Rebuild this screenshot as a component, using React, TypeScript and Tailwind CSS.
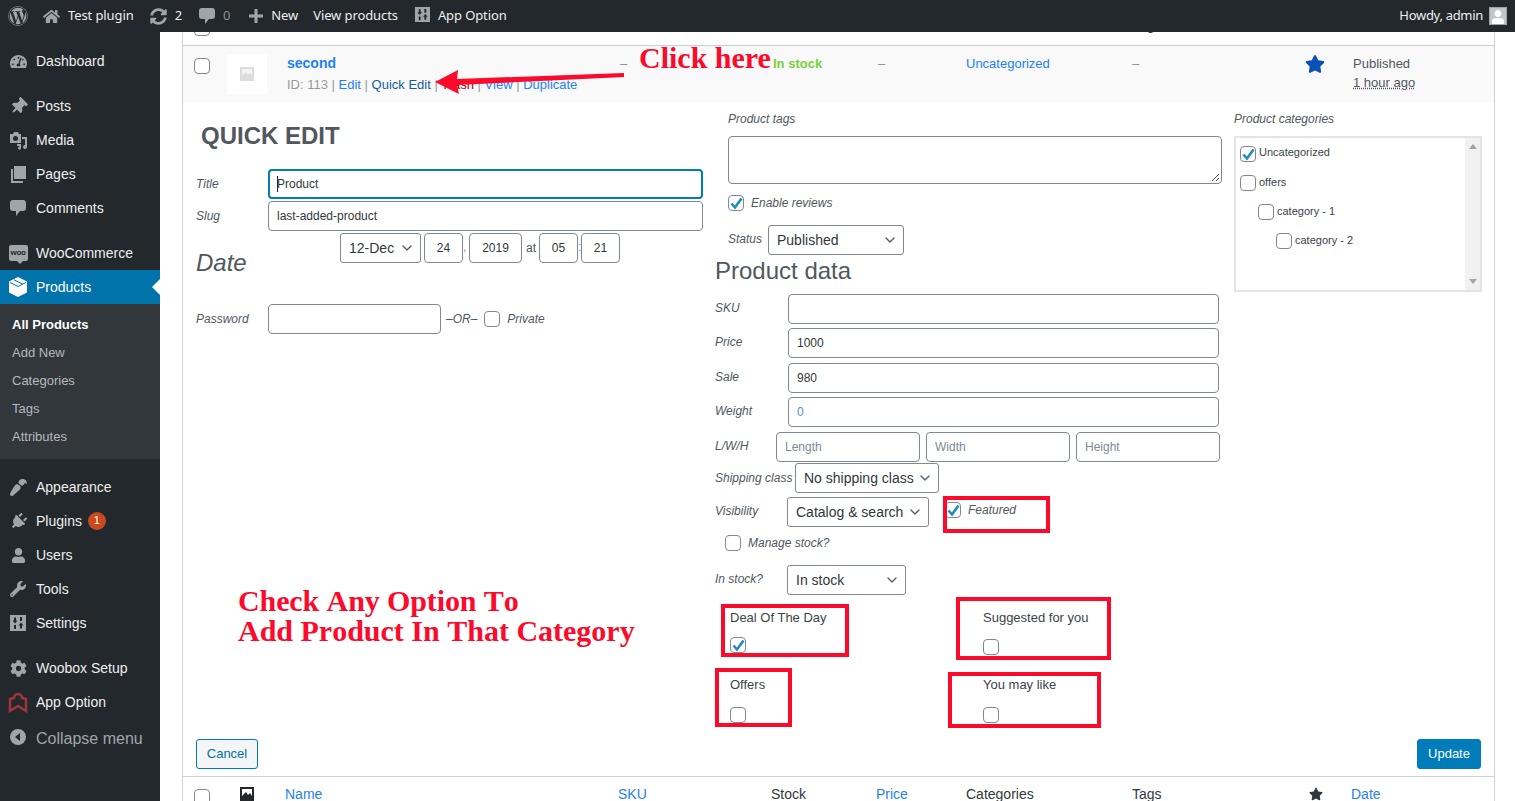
import { ReactNode } from "react";
import { ChevronDown } from "lucide-react";
import {
  FaCog,
  FaHome,
  FaPaintBrush,
  FaPlug,
  FaStar,
  FaSyncAlt,
  FaTachometerAlt,
  FaThumbtack,
  FaUser,
  FaWordpress,
  FaWrench,
} from "react-icons/fa";

const Sliders = ({ size = 16, color = "#a0a5aa" }: { size?: number; color?: string }) => (
  <svg width={size} height={size} viewBox="0 0 16 16">
    <path
      fill={color}
      fillRule="evenodd"
      d="M0 0h16v16H0zM4 2.500v3H2.500L5 8.500l2.500-3H6v-3zM4 10v4h2v-4zM10 2v4h2V2zM11 7.500L8.500 10.500H10v3h2v-3h1.500z"
    />
  </svg>
);

const Bubble = ({ color = "#a0a5aa" }: { color?: string }) => (
  <svg width="16" height="18" viewBox="0 0 16 18">
    <path fill={color} d="M3 1h10a3 3 0 0 1 3 3v5a3 3 0 0 1-3 3h-3l-4 5v-5H3a3 3 0 0 1-3-3V4a3 3 0 0 1 3-3z" />
  </svg>
);

const MediaIcon = () => (
  <svg width="19" height="19" viewBox="0 0 19 19" fill="#a0a5aa">
    <path fillRule="evenodd" d="M1 3h3l1-2h4l1 2h2v9H1zM6.500 5a2.500 2.500 0 1 0 0 5 2.500 2.500 0 0 0 0-5z" />
    <path d="M13 6h5v10a2 2 0 1 1-2-2V8h-3zM8 13h4v4a1.500 1.500 0 1 1-1.500-1.500V15H8z" />
  </svg>
);

const PagesIcon = () => (
  <svg width="15" height="17" viewBox="0 0 15 17" fill="#a0a5aa">
    <path d="M3 0h12v13H3z" />
    <path d="M0 3h2v12h10v2H0z" />
  </svg>
);

const BoxIcon = () => (
  <svg width="18" height="20" viewBox="0 0 18 20" fill="#fff">
    <path d="M9 0l9 4.500V15.500L9 20l-9-4.500V4.500z" />
    <path d="M1 5.500l8 4 8-4M5 2.800l8.500 4.200" fill="none" stroke="#0073aa" />
  </svg>
);

const WooIcon = () => (
  <div className="relative flex h-[16px] w-[19px] items-center justify-center rounded-[2px] bg-[#a0a5aa]">
    <span className="text-[8px] font-bold leading-none tracking-[-0.4px] text-[#23282d]">woo</span>
    <div className="absolute left-[8px] top-[16px] border-x-[3px] border-t-[3px] border-x-transparent border-t-[#a0a5aa]" />
  </div>
);

const RibbonIcon = () => (
  <svg width="20" height="22" viewBox="0 0 20 22" fill="none" stroke="#a0353f" strokeWidth="2.500">
    <path d="M2 20V8l4-1a4 4 0 0 1 8 0l4 1v12l-8-5z" />
  </svg>
);

const CollapseIcon = () => (
  <svg width="16" height="16" viewBox="0 0 16 16">
    <path fill="#a0a5aa" fillRule="evenodd" d="M8 0a8 8 0 1 1 0 16A8 8 0 0 1 8 0zM10 4L5 8l5 4z" />
  </svg>
);

const ImageIcon = ({ color = "#23282d", bg = "#fff" }: { color?: string; bg?: string }) => (
  <svg width="14" height="14" viewBox="0 0 14 14">
    <path fill={color} d="M0 0h14v14H0z" />
    <path fill={bg} d="M2 2h10v7l-2-3-2 2-2-3-4 4z" />
  </svg>
);

const Check = ({ on = false }: { on?: boolean }) => (
  <div className="relative h-4 w-4 shrink-0 rounded-[4px] border border-[#7e8993] bg-white">
    {on && (
      <svg className="absolute left-[-1px] top-[-1px]" width="17" height="17" viewBox="0 0 17 17">
        <path d="M3.500 8.500l3.500 4L13.500 3.500" fill="none" stroke="#1e8cbe" strokeWidth="2.600" />
      </svg>
    )}
  </div>
);

const Field = ({ value, placeholder, className }: { value?: string; placeholder?: string; className: string }) => (
  <input
    readOnly
    value={value ?? ""}
    placeholder={placeholder}
    className={`h-[30px] rounded-[4px] border border-[#7e8993] bg-white px-2 text-xs text-[#32373c] outline-none placeholder:text-[#7e8993] ${className}`}
  />
);

const Select = ({ label, className }: { label: string; className: string }) => (
  <div
    className={`flex h-[30px] shrink-0 items-center justify-between rounded-[3px] border border-[#7e8993] bg-white pl-2 pr-[5px] text-sm text-[#32373c] ${className}`}
  >
    <span className="whitespace-nowrap">{label}</span>
    <ChevronDown size={16} strokeWidth={2} color="#555d66" />
  </div>
);

const Label = ({ children, className }: { children: ReactNode; className: string }) => (
  <span className={`shrink-0 whitespace-nowrap text-xs italic text-[#50575e] ${className}`}>{children}</span>
);

const MenuItem = ({ icon, label, extra }: { icon: ReactNode; label: string; extra?: ReactNode }) => (
  <div className="flex h-[34px] items-center text-sm text-[#eeeeee]">
    <div className="flex w-9 justify-center">{icon}</div>
    <span>{label}</span>
    {extra}
  </div>
);

const Sidebar = () => (
  <aside className="flex w-40 shrink-0 flex-col bg-[#23282d] pt-3">
    <MenuItem icon={<FaTachometerAlt size={17} color="#a0a5aa" />} label="Dashboard" />
    <div className="mt-[11px]">
      <MenuItem icon={<FaThumbtack size={17} color="#a0a5aa" className="rotate-45" />} label="Posts" />
      <MenuItem icon={<MediaIcon />} label="Media" />
      <MenuItem icon={<PagesIcon />} label="Pages" />
      <MenuItem icon={<Bubble />} label="Comments" />
    </div>
    <div className="mt-[11px]">
      <MenuItem icon={<WooIcon />} label="WooCommerce" />
      <div className="relative flex h-[34px] items-center bg-[#0073aa] text-sm text-white">
        <div className="flex w-9 justify-center">
          <BoxIcon />
        </div>
        <span>Products</span>
        <div className="absolute right-0 top-[9px] border-y-8 border-r-8 border-y-transparent border-r-white" />
      </div>
      <div className="flex flex-col bg-[#32373c] pb-2 pl-3 pt-[7px] text-[13px] text-[#b4b9be]">
        <span className="flex h-7 items-center font-bold text-white">All Products</span>
        <span className="flex h-7 items-center">Add New</span>
        <span className="flex h-7 items-center">Categories</span>
        <span className="flex h-7 items-center">Tags</span>
        <span className="flex h-7 items-center">Attributes</span>
      </div>
    </div>
    <div className="mt-[11px]">
      <MenuItem icon={<FaPaintBrush size={17} color="#a0a5aa" className="rotate-180" />} label="Appearance" />
      <MenuItem
        icon={<FaPlug size={17} color="#a0a5aa" className="rotate-45" />}
        label="Plugins"
        extra={
          <span className="ml-[6px] flex h-[18px] w-[18px] items-center justify-center rounded-full bg-[#ca4a1f] text-[11px] text-white">
            1
          </span>
        }
      />
      <MenuItem icon={<FaUser size={15} color="#a0a5aa" />} label="Users" />
      <MenuItem icon={<FaWrench size={16} color="#a0a5aa" />} label="Tools" />
      <MenuItem icon={<Sliders />} label="Settings" />
    </div>
    <div className="mt-[11px]">
      <MenuItem icon={<FaCog size={17} color="#a0a5aa" />} label="Woobox Setup" />
      <MenuItem icon={<RibbonIcon />} label="App Option" />
    </div>
    <div className="mt-[3px] flex h-[34px] items-center text-base text-[#a0a5aa]">
      <div className="flex w-9 justify-center pb-1">
        <CollapseIcon />
      </div>
      <span>Collapse menu</span>
    </div>
  </aside>
);

const TopBar = () => (
  <header className="relative z-10 flex h-8 shrink-0 items-center justify-between bg-[#23282d] pl-2 pr-2 font-['Noto_Sans',sans-serif] text-[13px] tracking-[-0.1px] text-[#eeeeee]">
    <div className="flex items-center">
      <FaWordpress size={20} color="#a0a5aa" />
      <FaHome size={17} color="#a0a5aa" className="ml-[15px]" />
      <span className="ml-2">Test plugin</span>
      <FaSyncAlt size={17} color="#a0a5aa" className="ml-[16px]" />
      <span className="ml-2">2</span>
      <div className="ml-[17px] flex">
        <Bubble />
      </div>
      <span className="ml-2 text-[#8c8f94]">0</span>
      <svg className="ml-[19px]" width="14" height="14" viewBox="0 0 14 14" fill="#a0a5aa">
        <path d="M5.500 0h3v5.500H14v3H8.500V14h-3V8.500H0v-3h5.500z" />
      </svg>
      <span className="ml-2">New</span>
      <span className="ml-[15px]">View products</span>
      <div className="ml-[17px] flex pb-1">
        <Sliders size={15} />
      </div>
      <span className="ml-2">App Option</span>
    </div>
    <div className="flex items-center">
      <span className="tracking-[-0.3px]">Howdy, admin</span>
      <div className="ml-[6px] flex h-[18px] w-[18px] items-end justify-center overflow-hidden border border-[#a0a5aa] bg-[#c3c4c7]">
        <FaUser size={14} color="#fff" />
      </div>
    </div>
  </header>
);

const columns = "grid grid-cols-[57px_45px_333px_153px_105px_90px_166px_172px_47px_1fr]";

// the repeated header at the top sits mostly under the admin bar, only descenders show
const HeadRow = ({ scrolled }: { scrolled?: boolean }) => (
  <div className={`${columns} h-[37px] shrink-0 pt-[8px] text-sm leading-[18px] text-[#32373c]`}>
    <div className="pl-[11px] pt-1">
      <Check />
    </div>
    <div className="pt-[2px]">
      <ImageIcon />
    </div>
    <span className="text-[#2a7fe8]">{!scrolled && "Name"}</span>
    <span className="text-[#2a7fe8]">{!scrolled && "SKU"}</span>
    <span>{!scrolled && "Stock"}</span>
    <span className="text-[#2a7fe8]">{!scrolled && "Price"}</span>
    <span>{scrolled ? "" : "Categories"}</span>
    <span>Tags</span>
    <div className="pl-[5px] pt-[2px]">
      <FaStar size={14} color="#32373c" />
    </div>
    <span className="text-[#2a7fe8]">{!scrolled && "Date"}</span>
  </div>
);

const ProductRow = () => (
  <div className={`${columns} h-[57px] shrink-0 border-t border-[#ccd0d4] bg-[#f9f9f9] text-[13px] leading-[18px] text-[#50575e]`}>
    <div className="pl-[11px] pt-3">
      <Check />
    </div>
    <div className="-ml-[13px] pt-2">
      <div className="flex h-10 w-10 items-center justify-center bg-white">
        <ImageIcon color="#dcdcde" bg="#f4f4f4" />
      </div>
    </div>
    <div className="pl-[2px] pt-[7px]">
      <div className="text-sm font-bold text-[#1e7fff]">second</div>
      <div className="mt-[3px] whitespace-nowrap text-[#999999]">
        ID: 113 | <span className="text-[#1e7fff]">Edit</span> | <span className="text-[#135e96]">Quick Edit</span> |{" "}
        <span className="text-[#a00000]">Trash</span> | <span className="text-[#1e7fff]">View</span> |{" "}
        <span className="text-[#1e7fff]">Duplicate</span>
      </div>
    </div>
    <span className="pl-[2px] pt-[9px] text-[#8c8f94]">–</span>
    <span className="pl-[2px] pt-[9px] font-bold text-[#7ad03a]">In stock</span>
    <span className="pl-[2px] pt-[9px] text-[#8c8f94]">–</span>
    <span className="pt-[9px] text-[#1e7fff]">Uncategorized</span>
    <span className="pt-[9px] text-[#8c8f94]">–</span>
    <div className="pl-[1px] pt-[8px]">
      <FaStar size={20} color="#0a50b5" />
    </div>
    <div className="pl-[2px] pt-[9px]">
      <div>Published</div>
      <div className="mt-[1px] underline decoration-dotted">1 hour ago</div>
    </div>
  </div>
);

const LeftColumn = () => (
  <div className="flex w-[507px] shrink-0 flex-col">
    <h2 className="ml-[5px] mt-[19px] text-2xl font-bold leading-[30px] text-[#50575e]">QUICK EDIT</h2>
    <div className="mt-[18px] flex">
      <Label className="w-[72px] leading-[30px]">Title</Label>
      <div className="relative flex-1">
        <Field value="Product" className="w-full !border-2 !border-[#007cba] !pl-[7px]" />
        <div className="absolute left-[9px] top-[7px] h-4 w-px bg-[#23282d]" />
      </div>
    </div>
    <div className="mt-[2px] flex">
      <Label className="w-[72px] leading-[30px]">Slug</Label>
      <Field value="last-added-product" className="flex-1" />
    </div>
    <div className="mt-[2px] flex items-start">
      <div className="w-[144px] pt-[15px] text-2xl italic leading-[30px] text-[#50575e]">Date</div>
      <Select label="12-Dec" className="w-[81px]" />
      <Field value="24" className="ml-[3px] w-[39px] text-center" />
      <span className="w-[6px] pt-[6px] text-xs text-[#8c8f94]">,</span>
      <Field value="2019" className="w-[53px] text-center" />
      <span className="w-[17px] pl-[4px] pt-[7px] text-xs text-[#50575e]">at</span>
      <Field value="05" className="w-[39px] text-center" />
      <span className="w-[3px] pt-[6px] text-xs text-[#8c8f94]">:</span>
      <Field value="21" className="w-[39px] text-center" />
    </div>
    <div className="mt-[26px] flex items-center">
      <Label className="w-[72px]">Password</Label>
      <Field className="w-[173px]" />
      <Label className="ml-[5px]">–OR–</Label>
      <div className="ml-[7px]">
        <Check />
      </div>
      <Label className="ml-[7px]">Private</Label>
    </div>
  </div>
);

const DataRow = ({ label, value, placeholder, blue }: { label: string; value?: string; placeholder?: string; blue?: boolean }) => (
  <div className="flex">
    <Label className="w-[73px] leading-7">{label}</Label>
    <Field value={value} placeholder={placeholder} className={`w-[431px] ${blue ? "!text-[#5a8fb5]" : ""}`} />
  </div>
);

const MiddleColumn = () => (
  <div className="flex w-[507px] shrink-0 flex-col">
    <div className="flex flex-col pl-[13px]">
      <Label className="mt-2 leading-[18px]">Product tags</Label>
      <div className="relative mt-2 h-12 w-[494px] rounded-[4px] border border-[#7e8993] bg-white">
        <svg className="absolute bottom-[1px] right-[1px]" width="9" height="9" viewBox="0 0 9 9" stroke="#50575e">
          <path d="M1 8L8 1M5 8l3-3" />
        </svg>
      </div>
      <div className="mt-[11px] flex items-center">
        <Check on />
        <Label className="ml-[7px]">Enable reviews</Label>
      </div>
      <div className="mt-[14px] flex">
        <Label className="w-10 leading-7">Status</Label>
        <Select label="Published" className="w-[136px]" />
      </div>
    </div>
    <h3 className="mt-[1px] text-2xl leading-[30px] text-[#50575e]">Product data</h3>
    <div className="mt-2 flex flex-col">
      <DataRow label="SKU" />
      <div className="mt-1">
        <DataRow label="Price" value="1000" />
      </div>
      <div className="mt-[5px]">
        <DataRow label="Sale" value="980" />
      </div>
      <div className="mt-1">
        <DataRow label="Weight" value="0" blue />
      </div>
    </div>
    <div className="mt-[5px] flex">
      <Label className="w-[61px] leading-7">L/W/H</Label>
      <div className="flex gap-[6px]">
        <Field placeholder="Length" className="w-[144px]" />
        <Field placeholder="Width" className="w-[144px]" />
        <Field placeholder="Height" className="w-[144px]" />
      </div>
    </div>
    <div className="mt-px flex">
      <Label className="w-[80px] leading-[30px]">Shipping class</Label>
      <Select label="No shipping class" className="w-[144px]" />
    </div>
    <div className="mt-1 flex">
      <Label className="w-[72px] leading-7">Visibility</Label>
      <Select label="Catalog & search" className="w-[142px]" />
      <div className="ml-[16px] mt-[5px] flex h-4 items-center">
        <Check on />
        <Label className="ml-[7px]">Featured</Label>
      </div>
    </div>
    <div className="ml-[10px] mt-2 flex items-center">
      <Check />
      <Label className="ml-[7px]">Manage stock?</Label>
    </div>
    <div className="mt-[14px] flex">
      <Label className="w-[72px] leading-7">In stock?</Label>
      <Select label="In stock" className="w-[119px]" />
    </div>
    <div className="mt-[14px] grid grid-cols-[253px_1fr] pl-[15px] text-[13px] leading-[18px] text-[#3c434a]">
      <div>
        <div>Deal Of The Day</div>
        <div className="mt-[10px]">
          <Check on />
        </div>
      </div>
      <div>
        <div>Suggested for you</div>
        <div className="mt-[12px]">
          <Check />
        </div>
      </div>
      <div className="mt-[21px]">
        <div>Offers</div>
        <div className="mt-[13px]">
          <Check />
        </div>
      </div>
      <div className="mt-[21px]">
        <div>You may like</div>
        <div className="mt-[13px]">
          <Check />
        </div>
      </div>
    </div>
  </div>
);

const CategoryItem = ({ label, indent, on }: { label: string; indent: string; on?: boolean }) => (
  <div className={`flex h-[29px] items-start ${indent}`}>
    <Check on={on} />
    <span className={`ml-[3px] text-[11px] text-[#3c434a] ${on ? "leading-[12px]" : "leading-[14px]"}`}>{label}</span>
  </div>
);

const RightColumn = () => (
  <div className="flex w-[248px] shrink-0 flex-col">
    <Label className="mt-2 leading-[18px]">Product categories</Label>
    <div className="mt-2 flex h-[156px] border-2 border-[#e2e4e7] bg-white">
      <div className="flex-1 pl-[4px] pt-2">
        <CategoryItem label="Uncategorized" indent="" on />
        <CategoryItem label="offers" indent="" />
        <CategoryItem label="category - 1" indent="pl-[18px]" />
        <CategoryItem label="category - 2" indent="pl-[36px]" />
      </div>
      <div className="flex w-[15px] flex-col items-center justify-between bg-[#f1f1f1] py-[6px]">
        <div className="border-x-4 border-b-[5px] border-x-transparent border-b-[#a3a3a3]" />
        <div className="border-x-4 border-t-[5px] border-x-transparent border-t-[#a3a3a3]" />
      </div>
    </div>
  </div>
);

const QuickEdit = () => (
  <div className="flex h-[674px] shrink-0 flex-col bg-white px-[13px] pb-[7px]">
    <div className="flex flex-1 gap-3">
      <LeftColumn />
      <MiddleColumn />
      <RightColumn />
    </div>
    <div className="flex justify-between text-[13px]">
      <button className="h-[30px] w-[62px] rounded-[3px] border border-[#007cba] bg-[#f3f5f6] text-[#0071a1]">Cancel</button>
      <button className="h-[30px] w-[64px] rounded-[3px] border border-[#007cba] bg-[#007cba] text-white">Update</button>
    </div>
  </div>
);

// red marks someone drew over the screenshot
const redBoxes = [
  "left-[943px] top-[496px] h-[37px] w-[107px]",
  "left-[721px] top-[604px] h-[53px] w-[128px]",
  "left-[956px] top-[597px] h-[63px] w-[155px]",
  "left-[715px] top-[668px] h-[59px] w-[77px]",
  "left-[948px] top-[672px] h-[56px] w-[153px]",
];

const Annotations = () => (
  <>
    {redBoxes.map((box) => (
      <div key={box} className={`absolute border-[4px] border-[#fb0a2b] ${box}`} />
    ))}
    <span className="absolute left-[639px] top-[40px] font-['Liberation_Serif',serif] text-[30px] font-bold leading-9 text-[#fb0a2b]">
      Click here
    </span>
    <svg className="absolute left-[430px] top-[64px]" width="200" height="36" viewBox="0 0 200 36">
      <path fill="#fb0a2b" d="M5 18L28 6l-1 9 167-6v4L27 21l2 9z" />
    </svg>
    <div className="absolute left-[238px] top-[586px] font-['Liberation_Serif',serif] text-[30px] font-bold leading-[30px] text-[#fb0a2b] [font-kerning:none]">
      <div className="tracking-[-0.1px]">Check Any Option To</div>
      <div>Add Product In That Category</div>
    </div>
  </>
);

const App = () => (
  <div className="relative flex h-[801px] w-[1515px] flex-col overflow-hidden bg-white font-['Liberation_Sans',sans-serif]">
    <TopBar />
    <div className="flex min-h-0 flex-1">
      <Sidebar />
      <main className="ml-[22px] -mt-6 flex w-[1313px] flex-col border-x border-[#ccd0d4]">
        <HeadRow scrolled />
        <ProductRow />
        <QuickEdit />
        <div className="border-t border-[#ccd0d4]">
          <HeadRow />
        </div>
      </main>
    </div>
    <Annotations />
  </div>
);

export default App;
